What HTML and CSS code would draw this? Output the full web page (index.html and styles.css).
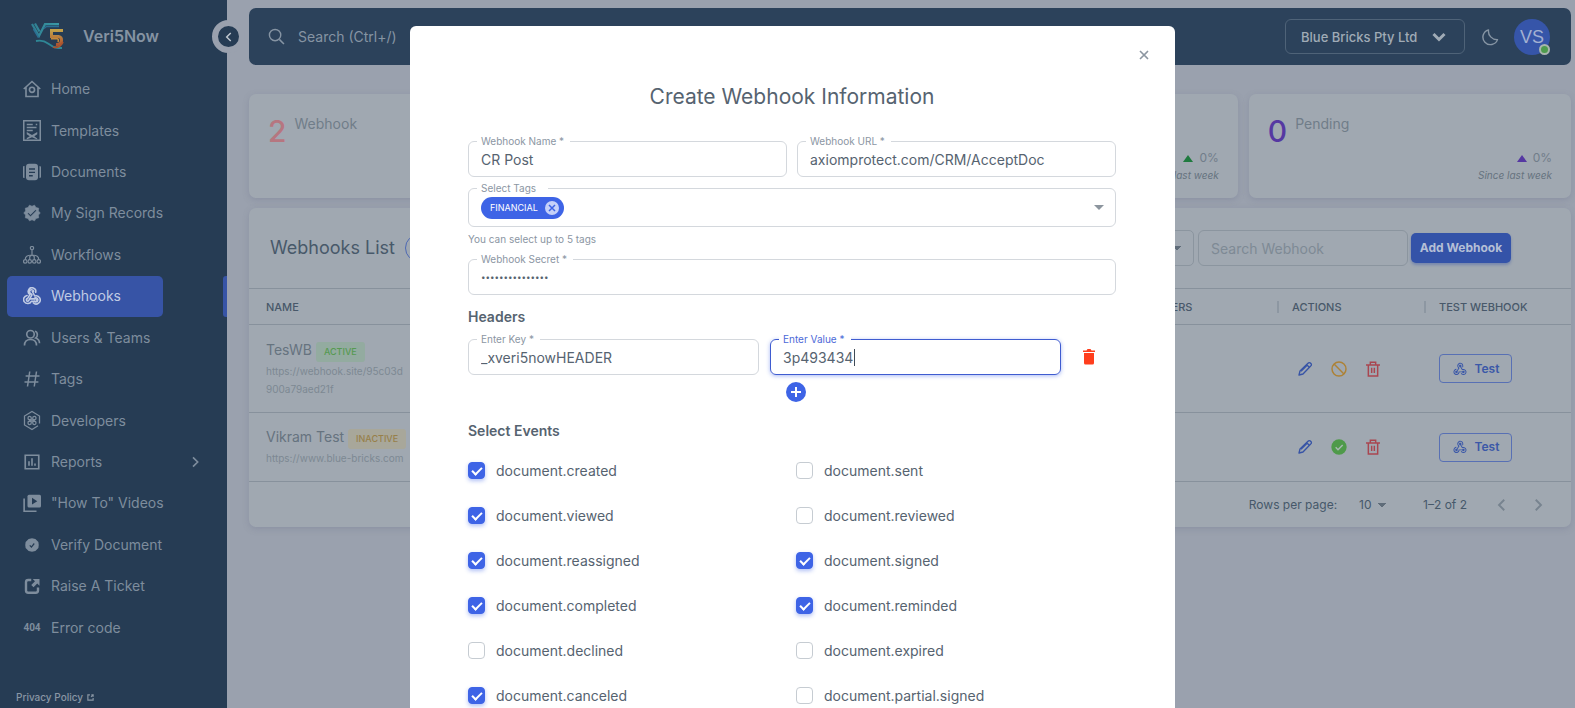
FILE: index.html
```html
<!DOCTYPE html>
<html lang="en">
<head>
<meta charset="utf-8">
<title>Veri5Now - Webhooks</title>
<meta name="viewport" content="width=device-width, initial-scale=1">
<link rel="stylesheet" href="styles.css">
</head>
<body>
<svg class="sprite" aria-hidden="true">
  <symbol id="i-webhook" viewBox="0 0 24 24"><path fill="currentColor" d="M10.46,19C9,21.07 6.15,21.59 4.09,20.15C2.04,18.71 1.56,15.84 3,13.75C3.87,12.5 5.21,11.83 6.58,11.77L6.63,13.2C5.72,13.27 4.84,13.74 4.27,14.56C3.27,16 3.58,17.94 4.95,18.91C6.33,19.87 8.26,19.5 9.26,18.07C9.57,17.62 9.75,17.13 9.82,16.63V15.62L15.4,15.58L15.47,15.47C16,14.55 17.15,14.23 18.05,14.75C18.95,15.27 19.26,16.43 18.73,17.35C18.2,18.26 17.04,18.58 16.14,18.06C15.73,17.83 15.44,17.46 15.31,17.04L11.24,17.06C11.13,17.73 10.87,18.38 10.46,19M17.74,11.86C20.27,12.17 22.07,14.44 21.76,16.93C21.45,19.43 19.15,21.2 16.62,20.89C15.13,20.71 13.9,19.86 13.19,18.68L14.43,17.96C14.92,18.73 15.75,19.28 16.75,19.41C18.5,19.62 20.05,18.43 20.26,16.76C20.47,15.09 19.23,13.56 17.5,13.35C16.96,13.29 16.44,13.36 15.97,13.53L15.12,13.97L12.54,9.2H12.32C11.26,9.16 10.41,8.29 10.44,7.25C10.47,6.21 11.4,5.4 12.45,5.44C13.5,5.5 14.33,6.35 14.3,7.39C14.28,7.83 14.11,8.23 13.84,8.54L15.74,12.05C16.36,11.85 17.04,11.78 17.74,11.86M8.25,9.14C7.25,6.79 8.31,4.1 10.62,3.12C12.94,2.14 15.62,3.25 16.62,5.6C17.21,6.97 17.09,8.47 16.42,9.67L15.18,8.95C15.6,8.14 15.67,7.15 15.27,6.22C14.59,4.62 12.78,3.85 11.23,4.5C9.67,5.16 8.97,7 9.65,8.6C9.93,9.26 10.4,9.77 10.97,10.11L11.36,10.32L8.29,15.31C8.32,15.36 8.36,15.42 8.39,15.5C8.88,16.41 8.54,17.56 7.62,18.05C6.71,18.54 5.56,18.18 5.06,17.24C4.57,16.31 4.91,15.16 5.83,14.67C6.22,14.46 6.65,14.41 7.06,14.5L9.37,10.73C8.9,10.3 8.5,9.76 8.25,9.14Z"/></symbol>
  <symbol id="i-hook" viewBox="0 0 24 24"><g fill="none" stroke="currentColor" stroke-linejoin="round" stroke-linecap="round" stroke-width="1.900"><path d="M16.500 7.500A4.600 4.600 0 1 0 9.500 10.300L6.500 15.200A1.600 1.600 0 1 0 8.300 17L12 10.500 10.800 9.200A2.500 2.500 0 1 1 14 6.500"/><path d="M6 11.300A5 5 0 1 0 11.200 18.500H16A1.600 1.600 0 1 0 16 15.500H9.500"/><path d="M12.500 6.500L15.300 12A5 5 0 1 1 13.500 20.300M14.800 15A2.500 2.500 0 1 1 15 18.500"/></g></symbol>
  <symbol id="i-pencil" viewBox="0 0 24 24"><g fill="none" stroke="currentColor" stroke-width="2" stroke-linejoin="round"><path d="M3 21l1.500-6L16.500 3.500a2.300 2.300 0 0 1 4 0 2.300 2.300 0 0 1 0 4L9 19.500z"/><path d="M14.500 5.500l4 4M6 15.500L15.500 6"/></g></symbol>
  <symbol id="i-trash" viewBox="0 0 24 24"><g fill="none" stroke="currentColor" stroke-width="2.200"><path d="M1.500 6h21M5 6v16.500h14V6M8 6V2h8v4M10 10v8M14 10v8"/></g></symbol>
  <symbol id="i-check" viewBox="0 0 24 24"><circle cx="12" cy="12" r="11.500" fill="currentColor"/><path d="M7 12.500l3.500 3.500L17.500 9" fill="none" stroke="#a9b9b3" stroke-width="2.200"/></symbol>
  <symbol id="i-ban" viewBox="0 0 24 24"><g fill="none" stroke="currentColor" stroke-width="2.200"><circle cx="12" cy="12" r="10.500"/><path d="M4.600 4.600l14.800 14.800"/></g></symbol>
  <symbol id="i-left" viewBox="0 0 24 24"><path d="M15 5l-7 7 7 7" fill="none" stroke="currentColor" stroke-width="2.500"/></symbol>
  <symbol id="i-right" viewBox="0 0 24 24"><path d="M9 5l7 7-7 7" fill="none" stroke="currentColor" stroke-width="2.500"/></symbol>
</svg>

<div class="app">
  <aside class="sidebar">
    <div class="brand">
      <svg class="logo" viewBox="0 0 34 28" aria-hidden="true">
        <defs><linearGradient id="g5" x1="0" y1="0" x2="0" y2="1"><stop offset="0" stop-color="#c2a04a"/><stop offset="1" stop-color="#b0552f"/></linearGradient>
        <linearGradient id="gt" x1="0" y1="0" x2="1" y2="0"><stop offset="0" stop-color="#2f7f92"/><stop offset="1" stop-color="#3a9aa6"/></linearGradient></defs>
        <g fill="none" stroke-width="1.500">
          <path d="M1 2L8 14L14 2.200H28M4 1.500L8.500 9.500" stroke="url(#gt)" stroke-width="2.200"/>
          <path d="M2.500 7L7.500 15.500M13 6.500L15.500 4.500H28" stroke="#2b6f93"/>
          <path d="M32 8.500H20.500V14.500H27.500Q31 15 30.500 19Q30 23 25 22.500" stroke="url(#g5)" stroke-width="3"/>
          <path d="M20 16.800H26.500Q28 17.500 27 20" stroke="#c48a3a"/>
          <path d="M5 19Q12 17.500 17 21.500T27 26H31" stroke="#2f8796" stroke-width="1.800"/>
          <path d="M22 25Q28 27 32 20" stroke="#a9542f" stroke-width="1.800"/>
        </g>
      </svg>
      <span class="brand-name">Veri5Now</span>
      <button class="collapse" type="button" aria-label="Collapse menu"><svg width="14" height="14"><use href="#i-left"/></svg></button>
    </div>
    <nav class="nav" aria-label="Main">
      <a href="#"><svg viewBox="0 0 24 24"><g fill="none" stroke="currentColor" stroke-width="2.200"><path d="M1 12L12 2l11 10M4 10v12h16V10"/><circle cx="12" cy="13" r="3.400"/></g></svg>Home</a>
      <a href="#"><svg class="tall" viewBox="0 0 24 28"><g fill="none" stroke="currentColor" stroke-width="2"><path d="M1 1h22v26H1zM5 6h8M5 10h13M5 14h8M17 6h2"/></g><path d="M5 16l7 4 7-4v3l-4 2.500 4 3V26l-7-3-7 3v-2l4-2.500L5 19z" fill="currentColor"/></svg>Templates</a>
      <a href="#"><svg viewBox="0 0 24 24"><path fill="currentColor" d="M1 4h1v16H1C0 20 0 19 0 18V6c0-1 0-2 1-2zM22 4c2 0 2 1 2 2v12c0 1 0 2-2 2z"/><rect x="4" y="1" width="16" height="22" rx="4" fill="currentColor"/><path d="M8 8h8M8 12.500h8M8 17h5" stroke="#263c54" stroke-width="1.800"/></svg>Documents</a>
      <a href="#"><svg viewBox="0 0 24 24"><path fill="currentColor" d="M23,12L20.560,9.220L20.900,5.540L17.290,4.720L15.400,1.540L12,3L8.600,1.540L6.710,4.720L3.100,5.530L3.440,9.210L1,12L3.440,14.780L3.100,18.470L6.710,19.290L8.600,22.470L12,21L15.400,22.460L17.290,19.280L20.900,18.460L20.560,14.780L23,12M10,17L6,13L7.410,11.590L10,14.170L16.590,7.580L18,9L10,17Z" stroke="currentColor" stroke-width=".8"/></svg>My Sign Records</a>
      <a href="#"><svg viewBox="0 0 24 24"><g fill="none" stroke="currentColor" stroke-width="1.600"><circle cx="12" cy="2.800" r="2.200"/><circle cx="3" cy="20.500" r="2.300"/><circle cx="9" cy="20.500" r="2.300"/><circle cx="15" cy="20.500" r="2.300"/><circle cx="21" cy="20.500" r="2.300"/><path d="M12 5v7M3 18c0-4 2-6 9-6s9 2 9 6M9 18v-4l3-2 3 2v4"/></g></svg>Workflows</a>
      <a href="#" class="active" aria-current="page"><svg viewBox="1 1 22 22"><use href="#i-hook" width="24" height="24"/></svg>Webhooks</a>
      <a href="#"><svg viewBox="0 0 24 24"><g fill="none" stroke="currentColor" stroke-width="2.200"><circle cx="10" cy="7" r="5"/><path d="M2 22c0-5 3-8 8-8s8 3 8 8M16 3c4 1 4 7 1 9 3 1 5 4 5 7"/></g></svg>Users &amp; Teams</a>
      <a href="#"><svg viewBox="0 0 24 24"><path d="M9 2L6 22M18 2l-3 20M3.500 8H22M2 16h18.500" fill="none" stroke="currentColor" stroke-width="2"/></svg>Tags</a>
      <a href="#"><svg class="tall" viewBox="0 0 24 26"><g fill="none" stroke="currentColor" stroke-width="1.700"><path d="M22 17v-10L12 1 2 7v12l10 6 8-5"/><path d="M11 12H8.500A2.200 2.200 0 1 1 11 9.500V16a2.200 2.200 0 1 1-2.500-2H11M13 14h2.500a2.200 2.200 0 1 1-2.500 2.500V10a2.200 2.200 0 1 1 2.500 2H13"/></g></svg>Developers</a>
      <a href="#"><svg viewBox="0 0 24 24"><path d="M3 3h18v18H3zM8 17v-6M12 17V7M16 17v-3" fill="none" stroke="currentColor" stroke-width="2.200"/></svg>Reports<svg class="more"><use href="#i-right"/></svg></a>
      <a href="#"><svg viewBox="0 0 24 24"><rect x="6" y="1" width="18" height="17" rx="2" fill="currentColor"/><path d="M1.500 6v17H18" fill="none" stroke="currentColor" stroke-width="2.200"/><path d="M12 5l7 4.500-7 4.500z" fill="#263c54"/></svg>"How To" Videos</a>
      <a href="#"><svg viewBox="0 0 24 24"><path fill="currentColor" d="M12 3l4.500 1 4 4 .5 4-.5 4-4 4-4.500 1-4.500-1-4-4L3 12l.5-4 4-4z"/><path d="M9 12.500l2.200 2.200L15 10" fill="none" stroke="#263c54" stroke-width="1.600"/></svg>Verify Document</a>
      <a href="#"><svg viewBox="0 0 24 24"><path d="M11 4H7Q4 4 4 7v11q0 3 3 3h10q3 0 3-3v-4" fill="none" stroke="currentColor" stroke-width="3.200"/><path d="M13 2.500h9v9l-3-3-5 5-3-3 5-5z" fill="currentColor"/></svg>Raise A Ticket</a>
      <a href="#"><span class="code" aria-hidden="true">404</span>Error code</a>
    </nav>
    <footer class="side-foot"><a href="#">Privacy Policy <svg width="7" height="7" viewBox="0 0 12 12"><path d="M5 1.500H1.500v9h9V7M7.500 1.500h3v3M10 2L7 5" fill="none" stroke="currentColor" stroke-width="2"/></svg></a></footer>
  </aside>

  <main class="main">
    <header class="topbar">
      <label class="search"><svg viewBox="0 0 24 24"><circle cx="10" cy="10" r="8" fill="none" stroke="currentColor" stroke-width="2"/><path d="M16 16l6.500 6.500" stroke="currentColor" stroke-width="2.200"/></svg><input type="search" placeholder="Search (Ctrl+/)" aria-label="Search"></label>
      <button class="org" type="button">Blue Bricks Pty Ltd<svg width="14" height="10" viewBox="0 0 14 10"><path d="M1.500 2l5.500 5.500L12.500 2" fill="none" stroke="currentColor" stroke-width="3"/></svg></button>
      <button class="moon" type="button" aria-label="Dark mode"><svg width="18" height="18" viewBox="0 0 24 24"><path d="M10 2.500A10 10 0 1 0 22 15.500 11.500 11.500 0 0 1 10 2.500z" fill="none" stroke="currentColor" stroke-width="1.900" stroke-linejoin="round"/></svg></button>
      <button class="avatar" type="button">VS<span class="online"></span></button>
    </header>

    <section class="stats">
      <article class="card stat red"><b>2</b><h3>Webhook</h3><p><i class="tri"></i>0%</p><small>Since last week</small></article>
      <article class="card stat blue"><b>0</b><h3>Active</h3><p><i class="tri"></i>0%</p><small>Since last week</small></article>
      <article class="card stat green"><b>0</b><h3>Inactive</h3><p><i class="tri"></i>0%</p><small>Since last week</small></article>
      <article class="card stat purple"><b>0</b><h3>Pending</h3><p><i class="tri"></i>0%</p><small>Since last week</small></article>
    </section>

    <section class="card list">
      <div class="list-head">
        <h2>Webhooks List</h2>
        <button class="info" type="button" aria-label="Information">i</button>
        <select class="status" aria-label="Status"><option>All</option></select>
        <input class="find" type="text" placeholder="Search Webhook" aria-label="Search Webhook">
        <button class="add" type="button">Add Webhook</button>
      </div>
      <table>
        <thead><tr><th class="c-name">NAME</th><th class="c-head">HEADERS</th><th class="c-act">ACTIONS</th><th class="c-test">TEST WEBHOOK</th></tr></thead>
        <tbody>
          <tr class="r-tall">
            <td><div class="wh">TesWB <span class="badge on">ACTIVE</span></div><div class="url">https://webhook.site/95c03d<br>900a79aed21f</div></td><td></td>
            <td><div class="acts"><button type="button" class="edit" aria-label="Edit"><svg><use href="#i-pencil"/></svg></button><button type="button" class="ban" aria-label="Disable"><svg><use href="#i-ban"/></svg></button><button type="button" class="del" aria-label="Delete"><svg><use href="#i-trash"/></svg></button></div></td>
            <td><button type="button" class="test"><svg><use href="#i-webhook"/></svg>Test</button></td>
          </tr>
          <tr class="r-short">
            <td><div class="wh">Vikram Test <span class="badge off">INACTIVE</span></div><div class="url">https://www.blue-bricks.com</div></td><td></td>
            <td><div class="acts"><button type="button" class="edit" aria-label="Edit"><svg><use href="#i-pencil"/></svg></button><button type="button" class="ok" aria-label="Enable"><svg><use href="#i-check"/></svg></button><button type="button" class="del" aria-label="Delete"><svg><use href="#i-trash"/></svg></button></div></td>
            <td><button type="button" class="test"><svg><use href="#i-webhook"/></svg>Test</button></td>
          </tr>
        </tbody>
      </table>
      <div class="pager">
        <label for="rpp">Rows per page:</label>
        <select id="rpp"><option>10</option></select>
        <span class="range">1–2 of 2</span>
        <button type="button" aria-label="Previous page"><svg width="18" height="18"><use href="#i-left"/></svg></button>
        <button type="button" aria-label="Next page"><svg width="18" height="18"><use href="#i-right"/></svg></button>
      </div>
    </section>
  </main>
</div>

<div class="overlay">
  <form class="modal" role="dialog" aria-labelledby="dlg-title">
    <button class="close" type="button" aria-label="Close"><svg width="10" height="10" viewBox="0 0 10 10"><path d="M1 1l8 8M9 1L1 9" stroke="currentColor" stroke-width="1.600"/></svg></button>
    <h1 id="dlg-title">Create Webhook Information</h1>
    <div class="two">
      <div class="field"><label for="wname">Webhook Name *</label><input id="wname" type="text" value="CR Post"></div>
      <div class="field"><label for="wurl">Webhook URL *</label><input id="wurl" type="text" value="axiomprotect.com/CRM/AcceptDoc"></div>
    </div>
    <div class="field tags">
      <label for="wtags">Select Tags</label>
      <span class="chip">FINANCIAL<button type="button" aria-label="Remove FINANCIAL"><svg width="14" height="14" viewBox="0 0 14 14"><circle cx="7" cy="7" r="7" fill="#c5d1f9"/><path d="M4 4l6 6M10 4l-6 6" stroke="#3e64e6" stroke-width="1.500"/></svg></button></span>
      <input id="wtags" type="text"><i class="caret-down"></i>
    </div>
    <p class="help">You can select up to 5 tags</p>
    <div class="field secret"><label for="wsecret">Webhook Secret *</label><input id="wsecret" type="password" value="abcdefghijklmno"></div>
    <h2 class="h-headers">Headers</h2>
    <div class="kv">
      <div class="field"><label for="hkey">Enter Key *</label><input id="hkey" type="text" value="_xveri5nowHEADER"></div>
      <div class="field focus"><label for="hval">Enter Value *</label><input id="hval" type="text" value="3p493434"><span class="cursor"></span></div>
      <button class="rm" type="button" aria-label="Delete header"><svg width="12" height="16" viewBox="0 0 12 16"><path d="M0 1.500h3.500L4.500 0h3l1 1.500H12V3H0zM1 4h10v10q0 1.500-1.500 1.500h-7Q1 15.500 1 14z" fill="#ff3e1d"/></svg></button>
    </div>
    <button class="plus" type="button" aria-label="Add header"><svg width="20" height="20" viewBox="0 0 20 20"><circle cx="10" cy="10" r="10" fill="#3e64e6"/><path d="M10 5v10M5 10h10" stroke="#fff" stroke-width="2"/></svg></button>
    <h2 class="h-events">Select Events</h2>
    <div class="events">
      <label><input type="checkbox" checked>document.created</label>
      <label><input type="checkbox">document.sent</label>
      <label><input type="checkbox" checked>document.viewed</label>
      <label><input type="checkbox">document.reviewed</label>
      <label><input type="checkbox" checked>document.reassigned</label>
      <label><input type="checkbox" checked>document.signed</label>
      <label><input type="checkbox" checked>document.completed</label>
      <label><input type="checkbox" checked>document.reminded</label>
      <label><input type="checkbox">document.declined</label>
      <label><input type="checkbox">document.expired</label>
      <label><input type="checkbox" checked>document.canceled</label>
      <label><input type="checkbox">document.partial.signed</label>
    </div>
  </form>
</div>
</body>
</html>
```

FILE: styles.css
```css
* { box-sizing: border-box; }
body {
  margin: 0;
  height: 100vh;
  overflow: hidden;
  background: #9aa1ae;
  color: #66737f;
  font: 14px/20px Inter, "Liberation Sans", sans-serif;
}
h1, h2, h3, p { margin: 0; font-weight: 400; }
button { padding: 0; border: 0; background: none; color: inherit; font: inherit; cursor: pointer; }
input, select { font: inherit; color: inherit; margin: 0; }
a { color: inherit; text-decoration: none; }
svg { display: block; flex: none; }
.sprite { position: absolute; width: 0; height: 0; }

.app { display: flex; height: 100vh; }

/* Sidebar */
.sidebar {
  flex: none;
  width: 227px;
  display: flex;
  flex-direction: column;
  background: #263c54;
  color: #7e8d9d;
}
.brand { position: relative; display: flex; align-items: center; height: 68px; padding: 4px 0 0 31px; }
.logo { width: 34px; height: 28px; margin-right: 18px; }
.brand-name { font-size: 16px; font-weight: 600; color: #8593a2; }
.collapse {
  position: absolute;
  top: 20px;
  right: -18px;
  width: 33px;
  height: 33px;
  display: grid;
  place-items: center;
  border: 6px solid #9aa1ae;
  border-radius: 50%;
  background: #263c54;
  color: #c0c8d0;
}
.nav { flex: 1; display: flex; flex-direction: column; }
.nav a { position: relative; flex: 1 1 0; display: flex; align-items: center; gap: 10px; margin: 1px 64px 0 7px; padding-left: 16px; white-space: nowrap; }
.nav svg { width: 18px; height: 18px; }
.nav svg.tall { height: 21px; }
.nav svg.more { position: absolute; right: -40px; width: 16px; }
.nav .active { border-radius: 5px; background: #3754a6; color: #c0cbe4; }
.nav .active::after { content: ""; position: absolute; top: 0; bottom: 0; right: -64px; width: 4px; border-radius: 3px 0 0 3px; background: #3754a6; }
.code { width: 18px; font: 700 10px/12px Roboto, sans-serif; text-align: center; }
.side-foot { height: 60px; padding: 39px 0 0 16px; font-size: 10px; font-weight: 500; }
.side-foot a { display: flex; gap: 4px; align-items: center; color: #8996a4; }

/* Page */
.main { flex: 1; min-width: 0; padding: 8px 4px 0 22px; }
.topbar { display: flex; align-items: center; height: 57px; padding: 0 21px 0 19px; border-radius: 7px; background: #2c425b; }
.search { flex: 1; display: flex; align-items: center; gap: 11px; color: #8694a3; }
.search svg { width: 17px; height: 17px; }
.search input { flex: 1; border: 0; outline: 0; background: none; }
.search input::placeholder { color: #8694a3; opacity: 1; }
.org { display: flex; align-items: center; justify-content: space-between; width: 180px; height: 35px; padding: 0 18px 0 15px; border: 1px solid #4f6378; border-radius: 6px; color: #a0abb6; font-size: 13px; font-weight: 500; }
.moon { margin: 0 15px 0 16px; color: #8795a4; }
.avatar { position: relative; width: 36px; height: 36px; border-radius: 50%; background: #3655a9; color: #a3b0d2; font: 18px/36px "Liberation Sans", sans-serif; }
.online { position: absolute; right: 0; bottom: 0; width: 11px; height: 11px; border: 2px solid #a9b5ae; border-radius: 50%; background: #4e9b4d; }

.card { border-radius: 7px; background: #a0a8b1; box-shadow: 0 2px 6px rgba(105, 112, 140, .3); }
.stats { display: grid; grid-template-columns: repeat(4, 1fr); gap: 11px; margin-top: 29px; }
.stat { display: grid; grid-template-columns: auto 1fr; column-gap: 8px; height: 104px; padding: 20px 19px 0; align-content: start; }
.stat b { font-size: 30px; line-height: 34px; font-weight: 500; }
.stat p { grid-column: 1 / -1; display: flex; align-items: center; justify-content: flex-end; gap: 6px; font-size: 12px; line-height: 16px; color: #717d8a; margin-top: 2px; }
.stat h3 { font-size: 14px; color: #707d89; }
.stat small { grid-column: 1 / -1; text-align: right; font-size: 10px; line-height: 18px; font-style: italic; }
.tri { border: 5px solid transparent; border-top: 0; border-bottom: 7px solid; }
.red b { color: #b67680; } .red i { color: #b67680; }
.green b, .green i { color: #1f7a3f; }
.blue b, .blue i { color: #3754a6; }
.purple b, .purple i { color: #5538a2; }

.list { margin-top: 10px; }
.list-head { display: flex; align-items: center; height: 80px; padding: 0 60px 0 21px; }
.list-head h2 { font-size: 18px; color: #48596a; }
.info { width: 28px; height: 28px; margin-left: 10px; border: 1px solid #4d68b4; border-radius: 50%; color: #3754a6; }
.status,
.pager select {
  appearance: none;
  background-image: linear-gradient(to bottom left, #5f6c79 50%, transparent 51%), linear-gradient(to bottom right, #5f6c79 50%, transparent 51%);
  background-repeat: no-repeat;
  background-size: 4px 4px;
  background-color: transparent;
}
.status { width: 120px; height: 36px; margin-left: auto; padding: 0 12px; border: 1px solid #8b959f; border-radius: 5px; background-position: right 16px center, right 12px center; }
.find { width: 210px; height: 36px; margin: 0 3px 0 4px; padding: 0 12px; border: 1px solid #8b959f; border-radius: 6px; background: none; }
.find::placeholder { color: #7e8a95; opacity: 1; }
.add { width: 100px; height: 30px; border-radius: 5px; background: #3453a8; color: #b4bfd6; font-size: 12px; font-weight: 700; box-shadow: 0 2px 3px rgba(52, 83, 168, .4); }

table { width: 100%; table-layout: fixed; border-collapse: collapse; }
tr { border-top: 1px solid #87919c; }
tbody tr:last-child { border-bottom: 1px solid #87919c; }
th, td { padding: 0 0 0 17px; text-align: left; }
th + th, td + td { padding-left: 15px; }
th { position: relative; height: 36px; font-size: 11px; font-weight: 500; color: #48586a; }
th + th::before { content: ""; position: absolute; left: 0; top: 12px; width: 2px; height: 12px; background: #8d97a2; }
.c-head { width: 151px; }
.c-act { width: 147px; }
.c-test { width: 147px; }
.r-tall { height: 88px; }
.r-short { height: 69px; }
.wh { line-height: 20px; }
.badge { display: inline-block; padding: 0 8px; border-radius: 3px; font-size: 9px; line-height: 20px; font-weight: 500; vertical-align: top; margin-top: 2px; }
.badge.on { background: #93aba0; color: #569a52; }
.badge.off { background: #a8a79a; color: #97804a; }
.url { font-size: 10px; line-height: 18px; color: #7d8893; }
.acts { display: flex; gap: 18px; padding-left: 5px; }
.acts svg { width: 16px; height: 16px; }
.edit { color: #3754a6; }
.ban { color: #ad8236; }
.ok { color: #4f9a4a; }
.del { color: #a94650; }
.test { display: flex; align-items: center; justify-content: center; gap: 7px; width: 73px; height: 29px; border: 1px solid #5870b4; border-radius: 4px; color: #3b58a8; font-size: 12px; font-weight: 600; }
.test svg { width: 16px; height: 16px; }
.pager { display: flex; align-items: center; justify-content: flex-end; height: 45px; padding-right: 24px; font-size: 12px; color: #46586a; }
.pager select { width: 28px; margin-left: 22px; border: 0; outline: 0; padding: 0; background-position: 19px 8px, 23px 8px; }
.pager .range { margin: 0 26px 0 36px; }
.pager button { color: #77838f; }
.pager button + button { margin-left: 18px; }

/* Dialog */
.overlay { position: fixed; inset: 0; display: flex; justify-content: center; align-items: flex-start; padding: 26px 0 0 10px; }
.modal {
  position: relative;
  width: 765px;
  min-height: calc(100vh - 26px);
  padding: 57px 59px 0 58px;
  border-radius: 6px 6px 0 0;
  background: #fff;
  color: #566370;
}
.close { position: absolute; top: 24px; right: 26px; color: #8c96a1; }
.modal h1 { font-size: 21px; line-height: 28px; text-align: center; }
.two { display: grid; grid-template-columns: 1fr 1fr; gap: 10px; margin-top: 30px; }
.field { position: relative; display: flex; align-items: center; height: 36px; border: 1px solid #d4d8dd; border-radius: 6px; }
.field label { position: absolute; left: 8px; top: -9px; padding: 0 6px 0 4px; background: #fff; font-size: 10px; line-height: 16px; color: #8b96a3; white-space: nowrap; }
.field input { flex: 1; min-width: 0; height: 34px; padding: 0 12px; border: 0; outline: 0; background: none; }
.tags { height: 39px; margin-top: 11px; padding-left: 12px; }
.field.tags label { padding-right: 12px; }
.chip { display: flex; align-items: center; gap: 7px; height: 22px; padding: 0 5px 0 9px; border-radius: 11px; background: #3e64e6; color: #fff; font-size: 9px; }
.caret-down { margin-right: 11px; border: 5px solid transparent; border-top: 5px solid #8c959e; border-bottom: 0; }
.help { margin-top: 4px; font-size: 10px; line-height: 16px; color: #8b96a3; }
.secret { margin-top: 12px; }
.secret input { font-size: 8px; }
.modal h2 { font-size: 14px; line-height: 20px; font-weight: 600; }
.modal .h-headers { margin-top: 12px; }
.kv { display: grid; grid-template-columns: 1fr 1fr 44px; column-gap: 11px; margin-top: 12px; }
.focus { border-color: #3f5cd0; box-shadow: 0 1px 4px rgba(62, 100, 230, .45); }
.focus label { color: #4c69d8; }
.cursor { position: absolute; left: 83px; top: 9px; width: 1px; height: 17px; background: #3f4b57; }
.rm { align-self: center; justify-self: start; margin-left: 11px; }
.plus { display: block; margin: 7px 0 0 318px; }
.modal .h-events { margin-top: 19px; }
.events { display: grid; grid-template-columns: 1fr 1fr; column-gap: 8px; margin-top: 7px; }
.events label { display: flex; align-items: center; height: 45px; gap: 11px; }
.events input { appearance: none; width: 17px; height: 17px; border: 1px solid #c6ccd2; border-radius: 4px; background: #fff; }
.events input:checked {
  border-color: #3e64e6;
  background: #3e64e6;
  box-shadow: 0 2px 4px rgba(62, 100, 230, .4);
  display: grid;
  place-items: center;
}
.events input:checked::before { content: ""; width: 8px; height: 4px; border: solid #fff; border-width: 0 0 2px 2px; transform: translateY(-1px) rotate(-45deg); }
```
